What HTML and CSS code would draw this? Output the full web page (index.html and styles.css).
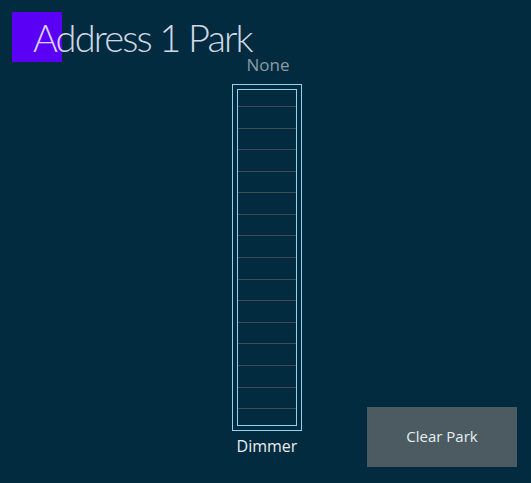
FILE: index.html
```html
<!DOCTYPE html>
<html lang="en">
<head>
<meta charset="utf-8">
<title>Address 1 Park</title>
<link rel="stylesheet" href="styles.css">
</head>
<body>
<div class="page">
  <div class="header">
    <div class="badge"></div>
    <h1 class="title">Address 1 Park</h1>
  </div>
  <div class="fader">
    <div class="fader-value">None</div>
    <div class="fader-outer">
      <div class="fader-inner">
        <div class="tick"></div><div class="tick"></div><div class="tick"></div><div class="tick"></div>
        <div class="tick"></div><div class="tick"></div><div class="tick"></div><div class="tick"></div>
        <div class="tick"></div><div class="tick"></div><div class="tick"></div><div class="tick"></div>
        <div class="tick"></div><div class="tick last"></div>
      </div>
    </div>
    <div class="fader-label">Dimmer</div>
  </div>
  <div class="actions">
    <button class="btn">Clear Park</button>
  </div>
</div>
</body>
</html>
```
FILE: styles.css
```css
html, body {
  margin: 0;
  padding: 0;
  background: #022b40;
}
.page {
  width: 531px;
  height: 483px;
  display: grid;
  grid-template-columns: 232px 70px 1fr;
  grid-template-rows: auto 1fr;
  font-family: "Open Sans", "Liberation Sans", sans-serif;
  overflow: hidden;
}
.header {
  grid-column: 1 / 4;
  position: relative;
  padding: 20px 0 0 33px;
  height: 34px;
}
.badge {
  position: absolute;
  left: 12px;
  top: 12px;
  width: 50px;
  height: 50px;
  background: #5a00f5;
}
.title {
  position: relative;
  margin: 0;
  width: fit-content;
  font-family: Lato, "Open Sans", sans-serif;
  font-size: 38px;
  line-height: 34px;
  font-weight: 300;
  letter-spacing: -1.85px;
  color: rgba(236, 240, 255, 0.9);
}
.fader {
  grid-column: 2;
  grid-row: 2;
  display: flex;
  flex-direction: column;
  align-items: center;
  padding-top: 2px;
}
.fader-value {
  font-size: 17px;
  line-height: 18px;
  color: #8a9ba5;
  padding-left: 2px;
}
.fader-outer {
  margin-top: 10px;
  width: 70px;
  border: 1px solid #8fd3f2;
  padding: 4px;
  box-sizing: border-box;
  height: 347px;
}
.fader-inner {
  border: 1px solid #8fd3f2;
  height: 100%;
  box-sizing: border-box;
  padding: 16px 0 16px;
  display: flex;
  flex-direction: column;
}
.tick {
  flex: 1;
  border-top: 1px solid #3b4c52;
}
.tick.last {
  border-bottom: 1px solid #3b4c52;
}
.fader-label {
  margin-top: 5px;
  font-size: 16px;
  line-height: 20px;
  color: #e8eef0;
}
.actions {
  grid-column: 3;
  grid-row: 2;
  display: flex;
  justify-content: flex-end;
  align-items: flex-end;
  padding: 0 14px 16px 0;
}
.btn {
  width: 150px;
  height: 60px;
  border: none;
  background: #4b5b61;
  color: #e6eef0;
  font-family: "Open Sans", "Liberation Sans", sans-serif;
  font-size: 15px;
  padding: 0 0 3px;
}
```
